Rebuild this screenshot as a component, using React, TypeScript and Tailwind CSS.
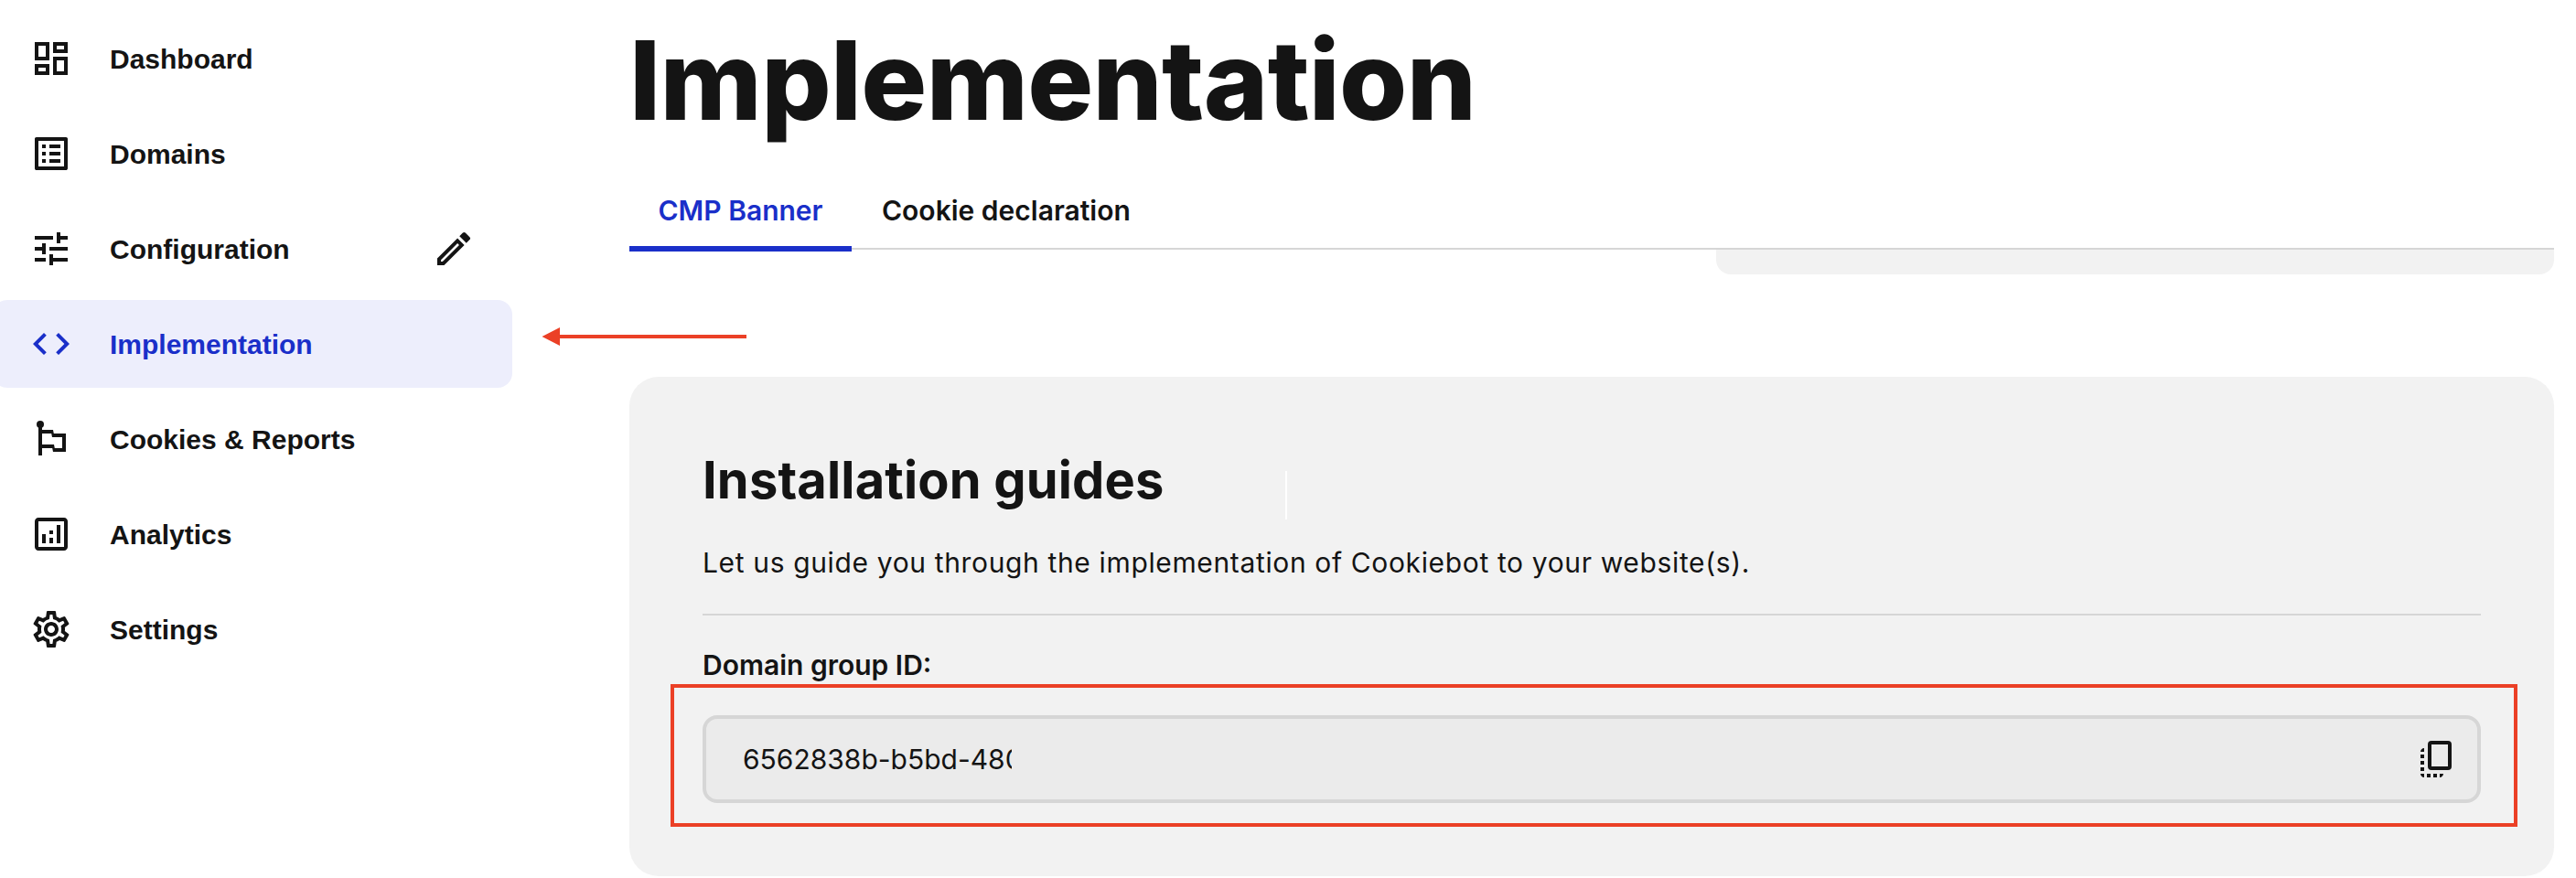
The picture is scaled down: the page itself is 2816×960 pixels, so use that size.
import type { ReactNode } from "react";
import {
  MdCode,
  MdOutlineAnalytics,
  MdOutlineDashboard,
  MdOutlineEdit,
  MdOutlineListAlt,
  MdOutlineSettings,
  MdTune,
} from "react-icons/md";

type NavItem = {
  label: string;
  icon: ReactNode;
  active?: boolean;
  editable?: boolean;
};

function FlagIcon() {
  return (
    <svg viewBox="0 0 48 48" className="size-12" fill="currentColor">
      <circle cx="12" cy="8" r="4" />
      <path
        fillRule="evenodd"
        d="M10 8h4v6h12l.8 4H40v20H26l-.8-4H14v8h-4ZM14 18v12h13l.8 4H36V22H25l-.8-4Z"
      />
    </svg>
  );
}

function CopyIcon() {
  return (
    <svg viewBox="0 0 48 48" className="size-12" fill="none">
      <rect x="16" y="6" width="22" height="28" rx="2" stroke="currentColor" strokeWidth="4" />
      <path
        fill="currentColor"
        d="M10 12v4H6c0-2.200 1.800-4 4-4ZM6 19h4v4H6zM6 26h4v4H6zM6 33h4v4H6zM6 40h4v4c-2.200 0-4-1.800-4-4ZM13 40h4v4h-4zM20 40h4v4h-4zM27 40h4c0 2.200-1.800 4-4 4Z"
      />
    </svg>
  );
}

const navItems: NavItem[] = [
  { label: "Dashboard", icon: <MdOutlineDashboard size={48} /> },
  { label: "Domains", icon: <MdOutlineListAlt size={48} /> },
  { label: "Configuration", icon: <MdTune size={48} />, editable: true },
  { label: "Implementation", icon: <MdCode size={48} />, active: true },
  { label: "Cookies & Reports", icon: <FlagIcon /> },
  { label: "Analytics", icon: <MdOutlineAnalytics size={48} /> },
  { label: "Settings", icon: <MdOutlineSettings size={48} /> },
];

function Sidebar() {
  return (
    <nav className="-ml-2 flex w-[568px] shrink-0 flex-col gap-2 pt-4 font-['Liberation_Sans',sans-serif]">
      {navItems.map((item) => (
        <a
          key={item.label}
          className={
            item.active
              ? "flex h-24 items-center gap-10 rounded-2xl bg-[#edeefc] px-10 text-[30px] font-bold text-[#1a2fc9]"
              : "flex h-24 items-center gap-10 rounded-2xl px-10 text-[30px] font-bold text-[#141414]"
          }
        >
          {item.icon}
          <span className="pt-px">{item.label}</span>
          {item.editable && <MdOutlineEdit size={48} className="ml-auto" />}
        </a>
      ))}
    </nav>
  );
}

function Arrow() {
  return (
    <svg viewBox="0 0 224 20" className="absolute top-[358px] left-[592px] h-5 w-56" fill="#eb4026">
      <path d="M0.500 10 20 0v8h204v4H20v8Z" />
    </svg>
  );
}

function InstallationGuides() {
  return (
    <section className="relative mt-28 h-[546px] rounded-[32px] bg-[#f2f2f2] px-20 pt-[85px]">
      <h2 className="text-[56px] leading-[56px] font-bold tracking-[0.150px]">Installation guides</h2>
      <span className="absolute top-[103px] left-[717px] h-[53px] w-0.5 bg-white" />
      <p className="mt-11 text-[30px] leading-9 tracking-[0.640px]">
        Let us guide you through the implementation of Cookiebot to your website(s).
      </p>
      <hr className="mt-[38px] border-t-2 border-[#d6d6d6]" />
      <label className="mt-[34px] block text-[30px] leading-10 font-semibold">Domain group ID:</label>
      <div className="mt-px -mr-10 -ml-[35px] h-39 border-4 border-[#eb4026] pt-[30px] pr-9 pl-[31px]">
        <div className="flex h-24 items-center justify-between rounded-2xl border-4 border-[#d6d6d6] bg-[#ebebeb] pr-5 pl-10">
          <span className="w-[294px] overflow-hidden pt-px text-[30px] whitespace-nowrap">6562838b-b5bd-480</span>
          <CopyIcon />
        </div>
      </div>
    </section>
  );
}

export default function App() {
  return (
    <div className="relative flex h-[960px] w-[2816px] overflow-hidden bg-white font-['Inter',sans-serif] text-[#141414]">
      <Sidebar />
      <Arrow />
      <main className="ml-32 w-[2104px]">
        <h1 className="pt-7 text-[120px] leading-[120px] font-extrabold tracking-[-0.7px]">Implementation</h1>
        <div className="mt-[41px] flex h-[84px] border-b-2 border-[#d6d6d6]">
          <a className="h-[86px] w-[243px] border-b-6 border-[#1a2fc9] pt-[21px] text-center text-[30px] leading-10 font-semibold text-[#1a2fc9]">
            CMP Banner
          </a>
          <a className="pt-[21px] pl-[33px] text-[30px] leading-10 font-semibold">Cookie declaration</a>
        </div>
        <div className="ml-auto h-[27px] w-[916px] rounded-b-2xl bg-[#f2f2f2]" />
        <InstallationGuides />
      </main>
    </div>
  );
}
